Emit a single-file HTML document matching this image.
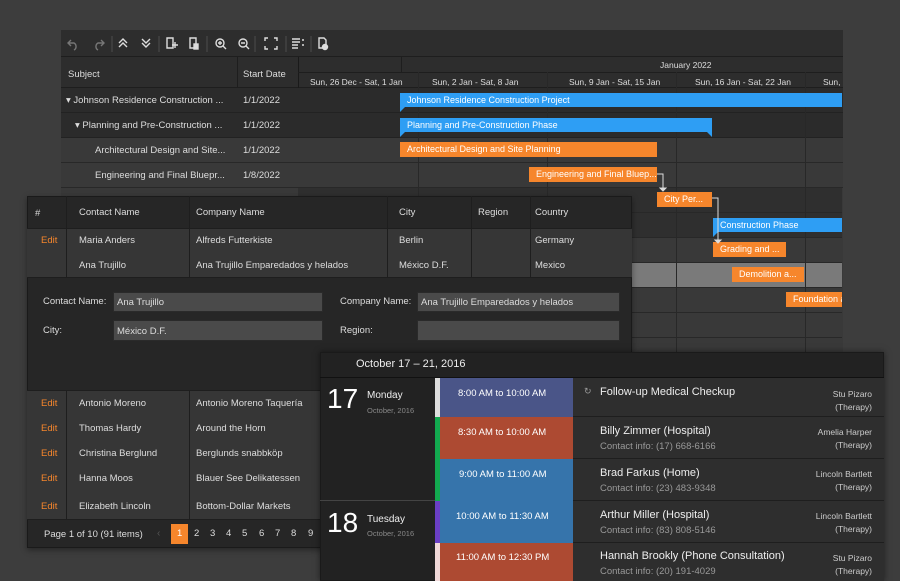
<!DOCTYPE html>
<html><head><meta charset="utf-8"><style>
*{margin:0;padding:0;box-sizing:border-box}
body{width:900px;height:581px;background:#3d3d3d;font-family:"Liberation Sans",sans-serif;font-size:10px;color:#ddd;position:relative;overflow:hidden}
.a{position:absolute}
.t{position:absolute;white-space:nowrap}
.bar{position:absolute;height:14px;color:#fff;font-size:9px;line-height:14px;padding-left:7px;white-space:nowrap;overflow:hidden}
.b{background:#2e9ef4}.o{background:#f6862c}
</style></head><body>
<!-- Gantt -->
<div class="a" style="left:61px;top:30px;width:782px;height:330px;background:#2d2d2d;border:1px solid #222"></div>
<div class="a" style="left:61px;top:30px;width:782px;height:27px;background:#2d2d2d;border-bottom:1px solid #1e1e1e"></div>
<svg class="a" style="left:61px;top:30px" width="300" height="27" fill="none" stroke="#ddd" stroke-width="1.4">
<path d="M10 10 l-3 3 3 3 M7 13 h6 a4 4 0 0 1 0 7" stroke="#777"/>
<path d="M40 10 l3 3 -3 3 M43 13 h-6 a4 4 0 0 0 0 7" stroke="#777"/>
<line x1="51" y1="6" x2="51" y2="22" stroke="#444"/>
<path d="M58 13 l4-4 4 4 M58 17 l4-4 4 4"/>
<path d="M81 9 l4 4 4-4 M81 13 l4 4 4-4"/>
<line x1="98" y1="6" x2="98" y2="22" stroke="#444"/>
<path d="M106 8 h6 v10 h-6 z M111 15 h6 M114 12 v6"/>
<path d="M129 8 h6 v10 h-6 z"/><rect x="133" y="14" width="4" height="5" fill="#ddd"/>
<line x1="146" y1="6" x2="146" y2="22" stroke="#444"/>
<circle cx="159" cy="13" r="4"/><path d="M162 16 l3 3 M157 13 h4 M159 11 v4"/>
<circle cx="182" cy="13" r="4"/><path d="M185 16 l3 3 M180 13 h4"/>
<line x1="194" y1="6" x2="194" y2="22" stroke="#444"/>
<path d="M204 11 v-3 h3 M213 8 h3 v3 M216 16 v3 h-3 M207 19 h-3 v-3"/>
<line x1="225" y1="6" x2="225" y2="22" stroke="#444"/>
<path d="M231 9 h8 M231 12 h8 M231 15 h6 M231 18 h6 M241 10 h2 M241 15 h2"/>
<line x1="250" y1="6" x2="250" y2="22" stroke="#444"/>
<path d="M258 8 h5 l2 2 v8 h-7 z"/><circle cx="264" cy="17" r="2.5" fill="#ddd"/>
</svg>
<!-- header -->
<div class="a" style="left:61px;top:57px;width:782px;height:31px;background:#2d2d2d;border-bottom:1px solid #1e1e1e"></div>
<div class="t" style="left:68px;top:69px;font-size:9.5px">Subject</div>
<div class="a" style="left:237px;top:57px;width:1px;height:140px;background:#1e1e1e"></div>
<div class="t" style="left:243px;top:69px;font-size:9.5px">Start Date</div>
<div class="a" style="left:298px;top:57px;width:1px;height:300px;background:#1a1a1a"></div>
<div class="a" style="left:298px;top:72px;width:544px;height:1px;background:#1e1e1e"></div>
<div class="a" style="left:401px;top:57px;width:1px;height:15px;background:#1e1e1e"></div>
<div class="t" style="left:660px;top:60px;font-size:8.5px">January 2022</div>
<div class="t" style="left:310px;top:77px;font-size:8.5px">Sun, 26 Dec - Sat, 1 Jan</div>
<div class="t" style="left:432px;top:77px;font-size:8.5px">Sun, 2 Jan - Sat, 8 Jan</div>
<div class="t" style="left:569px;top:77px;font-size:8.5px">Sun, 9 Jan - Sat, 15 Jan</div>
<div class="t" style="left:695px;top:77px;font-size:8.5px">Sun, 16 Jan - Sat, 22 Jan</div>
<div class="t" style="left:823px;top:77px;font-size:8.5px">Sun,</div>
<!-- rows -->
<div class="a" style="left:61px;top:88px;width:782px;height:50px;background:#2b2b2b"></div>
<div class="a" style="left:61px;top:138px;width:782px;height:220px;background:#393939"></div>
<div class="a" style="left:298px;top:188px;width:544px;height:50px;background:#2f2f2f"></div>
<div class="a" style="left:298px;top:262px;width:544px;height:25px;background:#7a7a7a"></div>
<div class="a" style="left:61px;top:112px;width:782px;height:1px;background:#222"></div>
<div class="a" style="left:61px;top:137px;width:782px;height:1px;background:#222"></div>
<div class="a" style="left:61px;top:162px;width:782px;height:1px;background:#282828"></div>
<div class="a" style="left:61px;top:187px;width:782px;height:1px;background:#282828"></div>
<div class="a" style="left:298px;top:212px;width:544px;height:1px;background:#282828"></div>
<div class="a" style="left:298px;top:237px;width:544px;height:1px;background:#282828"></div>
<div class="a" style="left:298px;top:262px;width:544px;height:1px;background:#282828"></div>
<div class="a" style="left:298px;top:287px;width:544px;height:1px;background:#282828"></div>
<div class="a" style="left:298px;top:312px;width:544px;height:1px;background:#282828"></div>
<div class="a" style="left:298px;top:337px;width:544px;height:1px;background:#282828"></div>
<div class="a" style="left:418px;top:72px;width:1px;height:290px;background:#282828"></div>
<div class="a" style="left:547px;top:72px;width:1px;height:290px;background:#282828"></div>
<div class="a" style="left:676px;top:72px;width:1px;height:290px;background:#282828"></div>
<div class="a" style="left:805px;top:72px;width:1px;height:290px;background:#282828"></div>
<div class="t" style="left:66px;top:95px;font-size:9.5px">▾ Johnson Residence Construction ...</div>
<div class="t" style="left:75px;top:120px;font-size:9.5px">▾ Planning and Pre-Construction ...</div>
<div class="t" style="left:95px;top:145px;font-size:9.5px">Architectural Design and Site...</div>
<div class="t" style="left:95px;top:170px;font-size:9.5px">Engineering and Final Bluepr...</div>
<div class="t" style="left:243px;top:95px;font-size:9.5px">1/1/2022</div>
<div class="t" style="left:243px;top:120px;font-size:9.5px">1/1/2022</div>
<div class="t" style="left:243px;top:145px;font-size:9.5px">1/1/2022</div>
<div class="t" style="left:243px;top:170px;font-size:9.5px">1/8/2022</div>
<!-- bars -->
<div class="bar b" style="left:400px;top:93px;width:442px">Johnson Residence Construction Project</div>
<div class="bar b" style="left:400px;top:118px;width:312px">Planning and Pre-Construction Phase</div>
<svg class="a" style="left:400px;top:107px" width="6" height="6"><path d="M0 0h5L0 5z" fill="#2e9ef4"/></svg>
<svg class="a" style="left:400px;top:132px" width="6" height="6"><path d="M0 0h5L0 5z" fill="#2e9ef4"/></svg>
<svg class="a" style="left:707px;top:132px" width="6" height="6"><path d="M0 0h5v5z" fill="#2e9ef4"/></svg>
<svg class="a" style="left:713px;top:232px" width="6" height="6"><path d="M0 0h5L0 5z" fill="#2e9ef4"/></svg>
<div class="bar o" style="left:400px;top:142px;width:257px;height:15px">Architectural Design and Site Planning</div>
<div class="bar o" style="left:529px;top:167px;width:128px;height:15px">Engineering and Final Bluep...</div>
<div class="bar o" style="left:657px;top:192px;width:55px;height:15px">City Per...</div>
<div class="bar b" style="left:713px;top:218px;width:129px">Construction Phase</div>
<div class="bar o" style="left:713px;top:242px;width:73px;height:15px">Grading and ...</div>
<div class="bar o" style="left:732px;top:267px;width:72px;height:15px">Demolition a...</div>
<div class="bar o" style="left:786px;top:292px;width:56px;height:15px">Foundation a</div>
<svg class="a" style="left:650px;top:170px" width="80" height="75" fill="none" stroke="#ddd"><path d="M7 4 h6 v14"/><path d="M10 18 l3 3 3-3z" fill="#ddd"/><path d="M62 28 h6 v42"/><path d="M65 70 l3 3 3-3z" fill="#ddd"/></svg>
<!-- Grid -->
<div class="a" style="left:27px;top:196px;width:605px;height:352px;background:#262626;border:1px solid #1a1a1a;box-shadow:0 2px 6px rgba(0,0,0,.4)"></div>
<div class="a" style="left:27px;top:228px;width:605px;height:50px;background:#363636;border-top:1px solid #1e1e1e;border-bottom:1px solid #1e1e1e"></div>
<div class="a" style="left:27px;top:390px;width:605px;height:130px;background:#363636;border-top:1px solid #1e1e1e;border-bottom:1px solid #1e1e1e"></div>
<div class="a" style="left:66px;top:196px;width:1px;height:82px;background:#1e1e1e"></div>
<div class="a" style="left:189px;top:196px;width:1px;height:82px;background:#1e1e1e"></div>
<div class="a" style="left:387px;top:196px;width:1px;height:82px;background:#1e1e1e"></div>
<div class="a" style="left:471px;top:196px;width:1px;height:82px;background:#1e1e1e"></div>
<div class="a" style="left:530px;top:196px;width:1px;height:82px;background:#1e1e1e"></div>
<div class="a" style="left:66px;top:390px;width:1px;height:130px;background:#1e1e1e"></div>
<div class="a" style="left:189px;top:390px;width:1px;height:130px;background:#1e1e1e"></div>
<div class="t" style="left:35px;top:208px;font-size:9.5px">#</div>
<div class="t" style="left:79px;top:207px;font-size:9.5px">Contact Name</div>
<div class="t" style="left:196px;top:207px;font-size:9.5px">Company Name</div>
<div class="t" style="left:399px;top:207px;font-size:9.5px">City</div>
<div class="t" style="left:478px;top:207px;font-size:9.5px">Region</div>
<div class="t" style="left:535px;top:207px;font-size:9.5px">Country</div>
<div class="t" style="left:41px;top:235px;color:#f6862c;font-size:9.5px">Edit</div>
<div class="t" style="left:79px;top:235px;font-size:9.5px">Maria Anders</div>
<div class="t" style="left:196px;top:235px;font-size:9.5px">Alfreds Futterkiste</div>
<div class="t" style="left:399px;top:235px;font-size:9.5px">Berlin</div>
<div class="t" style="left:535px;top:235px;font-size:9.5px">Germany</div>
<div class="t" style="left:79px;top:260px;font-size:9.5px">Ana Trujillo</div>
<div class="t" style="left:196px;top:260px;font-size:9.5px">Ana Trujillo Emparedados y helados</div>
<div class="t" style="left:399px;top:260px;font-size:9.5px">México D.F.</div>
<div class="t" style="left:535px;top:260px;font-size:9.5px">Mexico</div>
<div class="t" style="left:43px;top:296px;font-size:9.5px">Contact Name:</div>
<div class="a" style="left:113px;top:292px;width:210px;height:20px;background:#4a4a4a;border:1px solid #2a2a2a"></div>
<div class="t" style="left:117px;top:297px;font-size:9.5px">Ana Trujillo</div>
<div class="t" style="left:43px;top:325px;font-size:9.5px">City:</div>
<div class="a" style="left:113px;top:320px;width:210px;height:21px;background:#4a4a4a;border:1px solid #2a2a2a"></div>
<div class="t" style="left:117px;top:326px;font-size:9.5px">México D.F.</div>
<div class="t" style="left:340px;top:296px;font-size:9.5px">Company Name:</div>
<div class="a" style="left:417px;top:292px;width:203px;height:20px;background:#4a4a4a;border:1px solid #2a2a2a"></div>
<div class="t" style="left:421px;top:297px;font-size:9.5px">Ana Trujillo Emparedados y helados</div>
<div class="t" style="left:340px;top:325px;font-size:9.5px">Region:</div>
<div class="a" style="left:417px;top:320px;width:203px;height:21px;background:#4a4a4a;border:1px solid #2a2a2a"></div>
<div class="t" style="left:41px;top:398px;color:#f6862c;font-size:9.5px">Edit</div>
<div class="t" style="left:41px;top:423px;color:#f6862c;font-size:9.5px">Edit</div>
<div class="t" style="left:41px;top:448px;color:#f6862c;font-size:9.5px">Edit</div>
<div class="t" style="left:41px;top:473px;color:#f6862c;font-size:9.5px">Edit</div>
<div class="t" style="left:41px;top:501px;color:#f6862c;font-size:9.5px">Edit</div>
<div class="t" style="left:79px;top:398px;font-size:9.5px">Antonio Moreno</div>
<div class="t" style="left:79px;top:423px;font-size:9.5px">Thomas Hardy</div>
<div class="t" style="left:79px;top:448px;font-size:9.5px">Christina Berglund</div>
<div class="t" style="left:79px;top:473px;font-size:9.5px">Hanna Moos</div>
<div class="t" style="left:79px;top:501px;font-size:9.5px">Elizabeth Lincoln</div>
<div class="t" style="left:196px;top:398px;font-size:9.5px">Antonio Moreno Taquería</div>
<div class="t" style="left:196px;top:423px;font-size:9.5px">Around the Horn</div>
<div class="t" style="left:196px;top:448px;font-size:9.5px">Berglunds snabbköp</div>
<div class="t" style="left:196px;top:473px;font-size:9.5px">Blauer See Delikatessen</div>
<div class="t" style="left:196px;top:501px;font-size:9.5px">Bottom-Dollar Markets</div>
<div class="t" style="left:44px;top:529px;font-size:9.5px">Page 1 of 10 (91 items)</div>
<div class="t" style="left:157px;top:528px;font-size:10px;color:#555">‹</div>
<div class="a" style="left:171px;top:524px;width:17px;height:20px;background:#f6862c"></div>
<div class="t" style="left:177px;top:528px;font-size:9.5px;color:#fff">1</div>
<div class="t" style="left:194px;top:528px;font-size:9.5px">2</div>
<div class="t" style="left:210px;top:528px;font-size:9.5px">3</div>
<div class="t" style="left:226px;top:528px;font-size:9.5px">4</div>
<div class="t" style="left:242px;top:528px;font-size:9.5px">5</div>
<div class="t" style="left:259px;top:528px;font-size:9.5px">6</div>
<div class="t" style="left:275px;top:528px;font-size:9.5px">7</div>
<div class="t" style="left:291px;top:528px;font-size:9.5px">8</div>
<div class="t" style="left:308px;top:528px;font-size:9.5px">9</div>
<!-- Scheduler -->
<div class="a" style="left:320px;top:352px;width:564px;height:229px;background:#222;border:1px solid #1a1a1a;box-shadow:0 0 6px rgba(0,0,0,.5)"></div>
<div class="a" style="left:320px;top:377px;width:564px;height:1px;background:#111"></div>
<div class="t" style="left:356px;top:358px;font-size:11px;color:#eee">October 17 – 21, 2016</div>
<div class="a" style="left:320px;top:500px;width:115px;height:1px;background:#444"></div>
<div class="t" style="left:327px;top:383px;font-size:28px;color:#fff">17</div>
<div class="t" style="left:367px;top:390px;font-size:10px;color:#eee">Monday</div>
<div class="t" style="left:367px;top:406px;font-size:7.5px;color:#888">October, 2016</div>
<div class="t" style="left:327px;top:507px;font-size:28px;color:#fff">18</div>
<div class="t" style="left:367px;top:514px;font-size:10px;color:#eee">Tuesday</div>
<div class="t" style="left:367px;top:529px;font-size:7.5px;color:#888">October, 2016</div>
<div class="a" style="left:435px;top:378px;width:5px;height:39px;background:#ddd"></div>
<div class="a" style="left:435px;top:417px;width:5px;height:84px;background:#12a84f"></div>
<div class="a" style="left:435px;top:501px;width:5px;height:42px;background:#6a3fc4"></div>
<div class="a" style="left:435px;top:543px;width:5px;height:38px;background:#f0d8d8"></div>
<div class="a" style="left:440px;top:378px;width:133px;height:39px;background:#4a5588"></div>
<div class="a" style="left:440px;top:417px;width:133px;height:42px;background:#ad4a32"></div>
<div class="a" style="left:440px;top:459px;width:133px;height:42px;background:#3674ab"></div>
<div class="a" style="left:440px;top:501px;width:133px;height:42px;background:#3674ab"></div>
<div class="a" style="left:440px;top:543px;width:133px;height:38px;background:#ad4a32"></div>
<div class="t" style="left:458px;top:388px;font-size:9.5px;color:#fff">8:00 AM to 10:00 AM</div>
<div class="t" style="left:458px;top:427px;font-size:9.5px;color:#fff">8:30 AM to 10:00 AM</div>
<div class="t" style="left:459px;top:469px;font-size:9.5px;color:#fff">9:00 AM to 11:00 AM</div>
<div class="t" style="left:456px;top:511px;font-size:9.5px;color:#fff">10:00 AM to 11:30 AM</div>
<div class="t" style="left:456px;top:552px;font-size:9.5px;color:#fff">11:00 AM to 12:30 PM</div>
<div class="a" style="left:573px;top:378px;width:311px;height:203px;background:#2e2e2e"></div>
<div class="a" style="left:573px;top:416px;width:311px;height:1px;background:#1e1e1e"></div>
<div class="a" style="left:573px;top:458px;width:311px;height:1px;background:#1e1e1e"></div>
<div class="a" style="left:573px;top:500px;width:311px;height:1px;background:#1e1e1e"></div>
<div class="a" style="left:573px;top:542px;width:311px;height:1px;background:#1e1e1e"></div>
<div class="t" style="left:584px;top:386px;font-size:9px;color:#999">↻</div>
<div class="t" style="left:600px;top:386px;font-size:11px;color:#eee">Follow-up Medical Checkup</div>
<div class="t" style="left:600px;top:425px;font-size:11px;color:#eee">Billy Zimmer (Hospital)</div>
<div class="t" style="left:600px;top:441px;font-size:9.5px;color:#999">Contact info: (17) 668-6166</div>
<div class="t" style="left:600px;top:467px;font-size:11px;color:#eee">Brad Farkus (Home)</div>
<div class="t" style="left:600px;top:483px;font-size:9.5px;color:#999">Contact info: (23) 483-9348</div>
<div class="t" style="left:600px;top:509px;font-size:11px;color:#eee">Arthur Miller (Hospital)</div>
<div class="t" style="left:600px;top:525px;font-size:9.5px;color:#999">Contact info: (83) 808-5146</div>
<div class="t" style="left:600px;top:550px;font-size:11px;color:#eee">Hannah Brookly (Phone Consultation)</div>
<div class="t" style="left:600px;top:566px;font-size:9.5px;color:#999">Contact info: (20) 191-4029</div>
<div class="t" style="right:28px;top:388px;font-size:8.5px;color:#ccc;text-align:right;line-height:13px">Stu Pizaro<br>(Therapy)</div>
<div class="t" style="right:28px;top:426px;font-size:8.5px;color:#ccc;text-align:right;line-height:13px">Amelia Harper<br>(Therapy)</div>
<div class="t" style="right:28px;top:468px;font-size:8.5px;color:#ccc;text-align:right;line-height:13px">Lincoln Bartlett<br>(Therapy)</div>
<div class="t" style="right:28px;top:510px;font-size:8.5px;color:#ccc;text-align:right;line-height:13px">Lincoln Bartlett<br>(Therapy)</div>
<div class="t" style="right:28px;top:552px;font-size:8.5px;color:#ccc;text-align:right;line-height:13px">Stu Pizaro<br>(Therapy)</div>
</body></html>
